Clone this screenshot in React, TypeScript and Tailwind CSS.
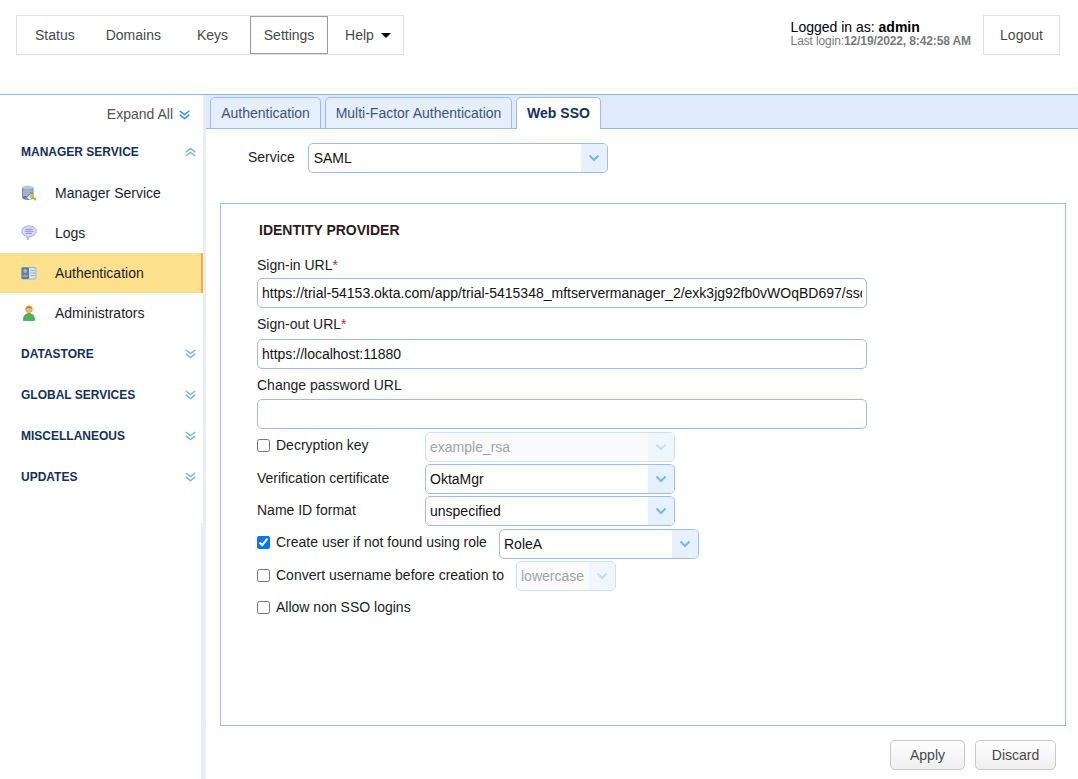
import React from "react";

const Double = ({ up = false, dark = false }: { up?: boolean; dark?: boolean }) => (
  <svg width="11" height="10" viewBox="0 0 11 10" fill="none" stroke={dark ? "#2b8fe3" : "#74b8ef"} strokeWidth="1.5" className={up ? "rotate-180" : ""}>
    <path d="M0.8 1 L5.5 4.6 L10.2 1" />
    <path d="M0.8 4.8 L5.5 8.6 L10.2 4.8" />
  </svg>
);

const DbIcon = () => (
  <svg width="16" height="16" viewBox="0 0 16 16">
    <path d="M1 2.5 V12.5 C1 14 3.5 15 6.5 15 C9.5 15 12.5 14 12.5 12.5 V2.5 Z" fill="#7f8cb0" />
    <ellipse cx="6.7" cy="2.6" rx="5.8" ry="2" fill="#bcc5dc" />
    <path d="M2 6 H11.5 M2 8 H9 M2 10 H7" stroke="#c9d6ee" strokeWidth="1" />
    <circle cx="3.5" cy="12.3" r="1.2" fill="#3f78d0" />
    <path d="M6 13 L10 8.5 L12.5 11 L9 14.5 Z" fill="#f3f3e6" />
    <circle cx="10.5" cy="11" r="2" fill="#e6c22c" />
    <path d="M11.5 12 L15 15" stroke="#c9a21c" strokeWidth="1.8" />
  </svg>
);
const LogIcon = () => (
  <svg width="16" height="16" viewBox="0 0 16 16">
    <path d="M8 1 C12.2 1 15.2 3.2 15.2 6.3 C15.2 9.3 12.2 11.5 8.6 11.5 L6.6 15 L5.8 11.2 C2.8 10.6 0.8 8.7 0.8 6.3 C0.8 3.2 3.8 1 8 1 Z" fill="#d6d8f6" stroke="#a7aae4" />
    <path d="M4.5 4.3 H11.5 M3.8 6.3 H12.2 M4.6 8.3 H11" stroke="#8f92ce" strokeWidth="1" />
  </svg>
);
const CardIcon = () => (
  <svg width="16" height="16" viewBox="0 0 16 16">
    <rect x="1" y="2.5" width="14" height="11.5" rx="0.5" fill="#d9e1ec" stroke="#8ea6c9" strokeWidth="0.8" />
    <rect x="0.5" y="2.5" width="7.5" height="11.5" rx="1" fill="#3c82dc" />
    <circle cx="4.2" cy="6" r="1.9" fill="#efa945" />
    <path d="M1.5 12 C1.5 8.6 7 8.6 7 12 Z" fill="#e6932f" />
    <path d="M9.5 5.5 H14 M9.5 8 H14 M9.5 10.5 H14" stroke="#a2aec2" strokeWidth="1" />
  </svg>
);
const UserIcon = () => (
  <svg width="16" height="16" viewBox="0 0 16 16">
    <circle cx="8" cy="4.2" r="3.4" fill="#efb866" stroke="#c98a34" strokeWidth="0.6" />
    <path d="M5 3.5 C5.5 1 10.5 1 11 3.5 C9.5 2.7 6.5 2.7 5 3.5 Z" fill="#b97a28" />
    <path d="M2.5 15.5 C2 10.5 5 8.5 8 8.5 C11 8.5 14 10.5 13.5 15.5 Z" fill="#45b854" stroke="#2f9440" strokeWidth="0.6" />
  </svg>
);

const NavItem = ({ icon, label, active = false }: { icon: React.ReactNode; label: string; active?: boolean }) => (
  <div className={active ? "flex h-10 items-center bg-[#fde18c] border-r-2 border-[#fda840] pl-[21px]" : "flex h-10 items-center pl-[21px]"}>
    <span className="flex w-[34px] shrink-0">{icon}</span>
    <span className="text-[14px] text-[#1c1c2c]">{label}</span>
  </div>
);

const Section = ({ label, up = false }: { label: string; up?: boolean }) => (
  <div className="flex h-[41px] items-center justify-between pl-[21px] pr-[7px]">
    <span className="text-[12px] font-bold text-[#14305e]">{label}</span>
    <Double up={up} />
  </div>
);

const Select = ({ value, width, disabled = false, wide = false }: { value: string; width: string; disabled?: boolean; wide?: boolean }) => (
  <div className={`flex h-[30px] shrink-0 items-stretch overflow-hidden rounded-[5px] border ${width} ${disabled ? "border-[#cfe0f6] bg-[#fafafa]" : "border-[#9dbde8] bg-white"}`}>
    <span className={`flex flex-1 items-center text-[14px] ${wide ? "pl-[5px]" : "pl-1"} ${disabled ? "text-[#a3a3a3]" : "text-[#111111]"}`}>{value}</span>
    <span className={`flex w-[26px] items-center justify-center ${disabled ? "bg-[#f0f6fe]" : "bg-[#e7f1fe]"}`}>
      <svg width="12" height="8" viewBox="0 0 12 8" fill="none" stroke={disabled ? "#c2dff8" : "#74b8ef"} strokeWidth="2">
        <path d="M1.5 1.5 L6 6 L10.5 1.5" />
      </svg>
    </span>
  </div>
);

const TextField = ({ value }: { value: string }) => (
  <input
    readOnly
    value={value}
    className="block h-[30px] w-[610px] rounded-[5px] border border-[#9dbde8] bg-white px-1 text-[14px] text-[#111111] outline-none"
  />
);

const Check = ({ checked = false }: { checked?: boolean }) => (
  <input type="checkbox" readOnly checked={checked} className="m-0 h-[13px] w-[13px] shrink-0" />
);

const Label = ({ children }: { children: React.ReactNode }) => (
  <span className="text-[14px] text-[#1c1c1c]">{children}</span>
);

const Required = () => <span className="text-[#d92020]">*</span>;

export default function App() {
  return (
    <div className="flex h-[779px] w-[1078px] flex-col overflow-hidden bg-white font-['Liberation_Sans',Arial,sans-serif]">
      <header className="flex h-[94px] shrink-0 items-start justify-between pl-4 pr-[18px] pt-[15px]">
        <nav className="flex h-10 w-[388px] items-center border border-[#e2e2e2] text-[14px] text-[#484848]">
          <span className="ml-[18px]">Status</span>
          <span className="ml-[31px]">Domains</span>
          <span className="ml-[36px]">Keys</span>
          <span className="ml-[22px] flex h-[38px] w-[78px] items-center justify-center border border-[#9b9b9b]">Settings</span>
          <span className="ml-[17px] flex items-center">
            Help
            <span className="ml-[7px] mt-[1px] h-0 w-0 border-x-[5px] border-t-[5px] border-x-transparent border-t-black" />
          </span>
        </nav>
        <div className="flex items-start">
          <div className="mr-3 mt-[5px] flex flex-col">
            <span className="text-[14px] leading-[15px] text-black">
              Logged in as: <b>admin</b>
            </span>
            <span className="text-[12px] leading-[13px] tracking-[-0.12px] text-[#7a7a7a]">
              Last login:<b>12/19/2022, 8:42:58 AM</b>
            </span>
          </div>
          <button className="h-10 w-[77px] border border-[#e2e2e2] bg-white text-[14px] text-[#484848]">Logout</button>
        </div>
      </header>

      <div className="flex flex-1 border-t border-[#90b8ea]">
        <aside className="relative w-[206px] shrink-0 border-r-[3px] border-[#e6eef9] bg-white">
          <div className="flex h-[38px] items-center justify-end pr-[13px] pt-[1px]">
            <span className="mr-[6px] text-[14px] text-[#505050]">Expand All</span>
            <Double dark />
          </div>
          <div className="-mt-[2px]">
            <Section label="MANAGER SERVICE" up />
          </div>
          <div className="mt-[1px]">
            <NavItem icon={<DbIcon />} label="Manager Service" />
            <NavItem icon={<LogIcon />} label="Logs" />
            <NavItem icon={<CardIcon />} label="Authentication" active />
            <NavItem icon={<UserIcon />} label="Administrators" />
          </div>
          <Section label="DATASTORE" />
          <Section label="GLOBAL SERVICES" />
          <Section label="MISCELLANEOUS" />
          <Section label="UPDATES" />
          <div className="absolute bottom-0 right-0 top-[428px] w-[2px] bg-[#e6eef9]" />
        </aside>

        <main className="flex min-w-0 flex-1 flex-col">
          <div className="flex h-[34px] items-end gap-[4px] border-b border-[#90b8ea] bg-[#dfeafc] pl-[4px] text-[14px]">
            <span className="mb-[-1px] flex h-[32px] w-[111px] items-center justify-center rounded-t-[5px] border border-[#9dbde8] bg-[#e6effc] text-[#3d5578]">Authentication</span>
            <span className="mb-[-1px] flex h-[32px] w-[187px] items-center justify-center rounded-t-[5px] border border-[#9dbde8] bg-[#e6effc] text-[#3d5578]">Multi-Factor Authentication</span>
            <span className="mb-[-1px] flex h-[32px] w-[85px] items-center justify-center rounded-t-[5px] border border-b-0 border-[#9dbde8] bg-white font-bold text-[#14305e]">Web SSO</span>
          </div>

          <div className="flex h-[44px] items-end pl-[42px]">
            <span className="mb-[5px] mr-[13px] text-[14px] text-[#1c1c1c]">Service</span>
            <Select value="SAML" width="w-[300px]" wide />
          </div>

          <section className="ml-[14px] mt-[30px] flex h-[523px] w-[846px] flex-col border border-[#9dbde8] pl-[36px] pt-[18px]">
            <h2 className="ml-[2px] text-[14px] font-bold leading-[16px] text-[#2c1c1c]">IDENTITY PROVIDER</h2>
            <div className="mt-[19px] flex flex-col">
              <div className="h-[17px] text-[14px] leading-[17px] text-[#1c1c1c]">Sign-in URL<Required /></div>
              <div className="mt-[4px]">
                <TextField value="https://trial-54153.okta.com/app/trial-5415348_mftservermanager_2/exk3jg92fb0vWOqBD697/sso/saml" />
              </div>
              <div className="mt-[8px] h-[17px] text-[14px] leading-[17px] text-[#1c1c1c]">Sign-out URL<Required /></div>
              <div className="mt-[6px]">
                <TextField value="https://localhost:11880" />
              </div>
              <div className="mt-[8px] h-[17px] text-[14px] leading-[17px] text-[#1c1c1c]">Change password URL</div>
              <div className="mt-[5px]">
                <TextField value="" />
              </div>
            </div>

            <div className="mt-[3px] flex h-[30px] items-center">
              <div className="-mt-[4px] flex w-[168px] items-center gap-[6px]">
                <Check />
                <Label>Decryption key</Label>
              </div>
              <Select value="example_rsa" width="w-[250px]" disabled />
            </div>
            <div className="mt-[2px] flex h-[30px] items-center">
              <div className="-mt-[3px] w-[168px]">
                <Label>Verification certificate</Label>
              </div>
              <Select value="OktaMgr" width="w-[250px]" />
            </div>
            <div className="mt-[2px] flex h-[30px] items-center">
              <div className="-mt-[3px] w-[168px]">
                <Label>Name ID format</Label>
              </div>
              <Select value="unspecified" width="w-[250px]" />
            </div>
            <div className="mt-[3px] flex h-[30px] items-center">
              <div className="-mt-[4px] flex w-[242px] items-center gap-[6px]">
                <Check checked />
                <Label>Create user if not found using role</Label>
              </div>
              <Select value="RoleA" width="w-[200px]" />
            </div>
            <div className="mt-[2px] flex h-[30px] items-center">
              <div className="-mt-[2px] flex w-[259px] items-center gap-[6px]">
                <Check />
                <Label>Convert username before creation to</Label>
              </div>
              <Select value="lowercase" width="w-[100px]" disabled />
            </div>
            <div className="mt-[6px] flex items-center gap-[6px]">
              <Check />
              <Label>Allow non SSO logins</Label>
            </div>
          </section>

          <div className="mt-[14px] flex justify-end gap-[10px] pr-[22px]">
            <button className="h-[30px] w-[75px] rounded-[5px] border border-[#c8c8c8] bg-gradient-to-b from-white to-[#efefef] text-[14px] text-[#484848]">Apply</button>
            <button className="h-[30px] w-[81px] rounded-[5px] border border-[#c8c8c8] bg-gradient-to-b from-white to-[#efefef] text-[14px] text-[#484848]">Discard</button>
          </div>
        </main>
      </div>
    </div>
  );
}
